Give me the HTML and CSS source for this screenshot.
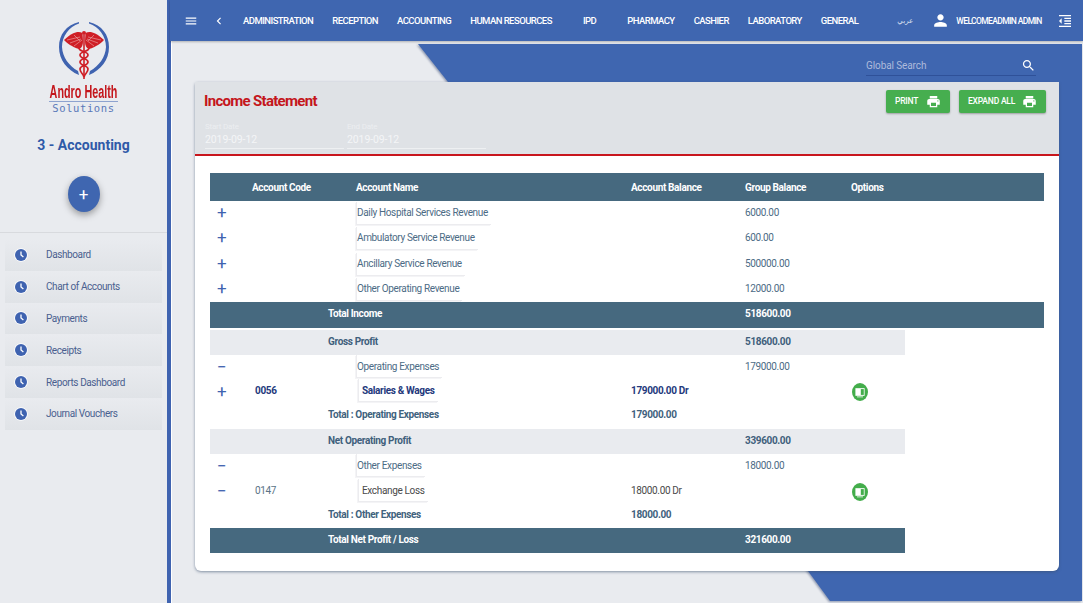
FILE: index.html
```html
<!DOCTYPE html>
<html lang="en">
<head>
<meta charset="utf-8">
<title>Income Statement</title>
<link rel="stylesheet" href="styles.css">
</head>
<body>
<svg class="defs" width="0" height="0" aria-hidden="true">
  <symbol id="i-print" viewBox="0 0 24 24"><path d="M19 8H5c-1.66 0-3 1.34-3 3v6h4v4h12v-4h4v-6c0-1.66-1.34-3-3-3zm-3 11H8v-5h8v5zm3-7c-.55 0-1-.45-1-1s.45-1 1-1 1 .45 1 1-.45 1-1 1zm-1-9H6v4h12V3z"/></symbol>
  <symbol id="i-clock" viewBox="0 0 14 14"><circle cx="7" cy="7" r="6.8" fill="#fff"/><circle cx="7" cy="7" r="6" fill="#3f63b0"/><path d="M7 3.4V7l2.4 2" fill="none" stroke="#fff" stroke-width="1.3"/></symbol>
  <symbol id="i-book" viewBox="0 0 16 16" preserveAspectRatio="none"><circle cx="8" cy="8" r="8" fill="#43ad4b"/><path d="M3.4 4.6h9.2v6.8H3.4z" fill="#fff"/><path d="M8.8 5.4h3v5.2h-3z" fill="#43ad4b"/><path d="M5 12h6v.7H5z" fill="#fff"/></symbol>
</svg>

<aside class="sidebar">
  <div class="brand">
    <svg class="brand-mark" viewBox="0 0 52 60" aria-hidden="true">
      <path d="M21 1C8 4 1 14 1 26c0 13 8 23 20 28l-1-4C11 45 4.500 36 4 26 4 15 11 6 21 2.500Z" fill="#3f63b0"/>
      <path d="M31 1c13 3 20 13 20 25 0 13-8 23-20 28l1-4c9-5 15.500-14 16-24 0-11-7-20-17-23.500Z" fill="#3f63b0"/>
      <path d="M24.500 12C20 10 15 11 6 19c3 3 8 7 15 9 3-1 4-4 4-8Z" fill="#cf1f26"/>
      <path d="M27.500 12C32 10 37 11 46 19c-3 3-8 7-15 9-3-1-4-4-4-8Z" fill="#cf1f26"/>
      <path d="M9 19l13-3M12 22l11-4M16 25l8-6M16 14l6 6M43 19l-13-3M40 22l-11-4M36 25l-8-6M36 14l-6 6" stroke="#f3c9c9" stroke-width=".5" fill="none"/>
      <path d="M26 14v44" stroke="#cf1f26" stroke-width="1.600"/>
      <path d="M21 27c0 4 9 3 9 7s-8 3-8 7 8 3 8 7-3 4-4 8" fill="none" stroke="#cf1f26" stroke-width="1.700"/>
      <path d="M31 27c0 4-9 3-9 7s8 3 8 7-8 3-8 7 3 4 4 8" fill="none" stroke="#cf1f26" stroke-width="1.700"/>
      <circle cx="26" cy="12" r="2" fill="#cf1f26"/>
    </svg>
    <div class="brand-name"><span class="brand-name-text">Andro Health</span></div>
    <div class="brand-sub">Solutions</div>
  </div>
  <h2 class="module">3 - Accounting</h2>
  <button class="fab" type="button">+</button>
  <nav class="side-menu">
    <a class="side-item"><svg class="side-icon"><use href="#i-clock"/></svg>Dashboard</a>
    <a class="side-item"><svg class="side-icon"><use href="#i-clock"/></svg>Chart of Accounts</a>
    <a class="side-item"><svg class="side-icon"><use href="#i-clock"/></svg>Payments</a>
    <a class="side-item"><svg class="side-icon"><use href="#i-clock"/></svg>Receipts</a>
    <a class="side-item"><svg class="side-icon"><use href="#i-clock"/></svg>Reports Dashboard</a>
    <a class="side-item"><svg class="side-icon"><use href="#i-clock"/></svg>Journal Vouchers</a>
  </nav>
</aside>

<div class="main">
  <header class="topbar">
    <svg class="tb-menu" viewBox="0 0 24 24"><path d="M3 18h18v-2H3v2zm0-5h18v-2H3v2zm0-7v2h18V6H3z"/></svg>
    <svg class="tb-back" viewBox="0 0 24 24"><path d="M15.410 7.410L14 6l-6 6 6 6 1.410-1.410L10.830 12z"/></svg>
    <nav class="tb-nav">
      <a>ADMINISTRATION</a><a>RECEPTION</a><a>ACCOUNTING</a><a>HUMAN RESOURCES</a><a class="tb-ipd">IPD</a><a>PHARMACY</a><a>CASHIER</a><a>LABORATORY</a><a>GENERAL</a>
    </nav>
    <span class="tb-lang">عربي</span>
    <svg class="tb-user" viewBox="0 0 24 24"><path d="M12 12c2.210 0 4-1.790 4-4s-1.790-4-4-4-4 1.790-4 4 1.790 4 4 4zm0 2c-2.670 0-8 1.340-8 4v2h16v-2c0-2.660-5.330-4-8-4z"/></svg>
    <span class="tb-name">WELCOMEADMIN ADMIN</span>
    <svg class="tb-collapse" viewBox="0 0 24 24"><path d="M11 17h10v-2H11v2zm-8-5l4 4V8l-4 4zm0 9h18v-2H3v2zM3 3v2h18V3H3zm8 6h10V7H11v2zm0 4h10v-2H11v2z"/></svg>
  </header>

  <div class="content">
    <div class="backdrop"><div class="backdrop-shape"></div></div>
    <div class="search-row">
      <label class="search">
        <span class="search-text">Global Search</span>
        <svg class="search-icon" viewBox="0 0 24 24"><path d="M15.500 14h-.79l-.28-.27C15.410 12.590 16 11.110 16 9.500 16 5.910 13.090 3 9.500 3S3 5.910 3 9.500 5.910 16 9.500 16c1.610 0 3.090-.59 4.230-1.570l.27.28v.79l5 4.990L20.490 19l-4.990-5zm-6 0C7.010 14 5 11.990 5 9.500S7.010 5 9.500 5 14 7.010 14 9.500 11.990 14 9.500 14z"/></svg>
      </label>
    </div>

    <section class="card">
      <div class="card-head">
        <div class="head-left">
          <h1 class="title">Income Statement</h1>
          <div class="dates">
            <div class="date"><span class="date-label">Start Date</span><span class="date-value">2019-09-12</span></div>
            <div class="date"><span class="date-label">End Date</span><span class="date-value">2019-09-12</span></div>
          </div>
        </div>
        <div class="actions">
          <button class="btn btn-print" type="button">PRINT<svg class="btn-icon"><use href="#i-print"/></svg></button>
          <button class="btn btn-expand" type="button">EXPAND ALL<svg class="btn-icon"><use href="#i-print"/></svg></button>
        </div>
      </div>

      <div class="table">
        <div class="row row-head">
          <span class="c-code">Account Code</span><span class="c-name">Account Name</span><span class="c-bal">Account Balance</span><span class="c-group">Group Balance</span><span class="c-opt">Options</span>
        </div>

        <div class="row row-item"><span class="c-tog">+</span><span class="c-name"><span class="tag">Daily Hospital Services Revenue</span></span><span class="c-group">6000.00</span></div>
        <div class="row row-item"><span class="c-tog">+</span><span class="c-name"><span class="tag">Ambulatory Service Revenue</span></span><span class="c-group">600.00</span></div>
        <div class="row row-item"><span class="c-tog">+</span><span class="c-name"><span class="tag">Ancillary Service Revenue</span></span><span class="c-group">500000.00</span></div>
        <div class="row row-item"><span class="c-tog">+</span><span class="c-name"><span class="tag">Other Operating Revenue</span></span><span class="c-group">12000.00</span></div>

        <div class="row row-total row-wide"><span class="c-label">Total Income</span><span class="c-group">518600.00</span></div>
        <div class="row row-sub"><span class="c-label">Gross Profit</span><span class="c-group">518600.00</span></div>

        <div class="row row-parent"><span class="c-tog">−</span><span class="c-name"><span class="tag">Operating Expenses</span></span><span class="c-group">179000.00</span></div>
        <div class="row row-acct row-strong"><span class="c-tog">+</span><span class="c-code">0056</span><span class="c-name"><span class="tag tag-in">Salaries &amp; Wages</span></span><span class="c-bal">179000.00 Dr</span><span class="c-opt"><svg class="opt-icon"><use href="#i-book"/></svg></span></div>
        <div class="row row-sum"><span class="c-label">Total : Operating Expenses</span><span class="c-bal">179000.00</span></div>
        <div class="row row-sub"><span class="c-label">Net Operating Profit</span><span class="c-group">339600.00</span></div>

        <div class="row row-parent row-parent-tall"><span class="c-tog">−</span><span class="c-name"><span class="tag">Other Expenses</span></span><span class="c-group">18000.00</span></div>
        <div class="row row-acct"><span class="c-tog">−</span><span class="c-code">0147</span><span class="c-name"><span class="tag tag-in">Exchange Loss</span></span><span class="c-bal">18000.00 Dr</span><span class="c-opt"><svg class="opt-icon"><use href="#i-book"/></svg></span></div>
        <div class="row row-sum"><span class="c-label">Total : Other Expenses</span><span class="c-bal">18000.00</span></div>
        <div class="row row-total row-end"><span class="c-label">Total Net Profit / Loss</span><span class="c-group">321600.00</span></div>
      </div>
    </section>
  </div>
</div>
</body>
</html>
```
FILE: styles.css
```css
* { box-sizing: border-box; }
html, body { margin: 0; height: 100%; }
body {
  display: flex;
  width: 1083px;
  height: 603px;
  overflow: hidden;
  font-family: Roboto, "Liberation Sans", sans-serif;
  background: #e9ebef;
}
.defs { position: absolute; }

/* Sidebar */
.sidebar {
  width: 171px;
  flex: none;
  background: #e9ebef;
  border-right: 4px solid #3f63b0;
  display: flex;
  flex-direction: column;
  align-items: center;
  padding-top: 21px;
}
.brand { display: flex; flex-direction: column; align-items: center; }
.brand-mark { width: 52px; height: 60px; display: block; }
.brand-name {
  width: 69px;
  height: 18px;
  margin-top: 2px;
  display: flex;
  justify-content: center;
  white-space: nowrap;
}
.brand-name-text {
  flex: none;
  font-family: "Liberation Sans", sans-serif;
  font-weight: 700;
  font-size: 18px;
  line-height: 18px;
  color: #c4161c;
  transform: scaleX(.6);
}
.brand-sub {
  width: 69px;
  text-align: center;
  border-top: 1px solid #8ea3cf;
  font-family: "DejaVu Sans Mono", monospace;
  font-size: 10.500px;
  line-height: 12px;
  letter-spacing: .6px;
  color: #5b79b9;
}
.module {
  margin: 22px 0 0;
  font-size: 14px;
  line-height: 18px;
  font-weight: 700;
  color: #2f5aa8;
}
.fab {
  margin-top: 22px;
  width: 32px;
  height: 36px;
  border: 0;
  border-radius: 50%;
  background: #3f66b0;
  color: #fff;
  font: 400 17px/36px Roboto, sans-serif;
  padding: 0;
  box-shadow: 0 3px 7px rgba(0, 0, 0, .35);
}
.side-menu {
  align-self: stretch;
  margin-top: 20px;
  border-top: 1px solid #d8dade;
  padding: 6px 5px 0;
}
.side-item {
  display: flex;
  align-items: center;
  height: 31.800px;
  font-size: 10px;
  letter-spacing: -.4px;
  color: #4a5f8f;
  background: linear-gradient(#e9ebef, #e0e3e7);
}
.side-icon { width: 14px; height: 14px; margin: 0 18px 0 9px; flex: none; }

/* Top bar */
.main { flex: 1; min-width: 0; display: flex; flex-direction: column; }
.topbar {
  height: 41px;
  flex: none;
  margin-left: -1px;
  background: #3f66b0;
  display: flex;
  align-items: center;
  color: #fff;
  position: relative;
  z-index: 2;
  box-shadow: 0 1px 2px rgba(0, 0, 0, .25);
}
.topbar svg { fill: #fff; flex: none; }
.tb-menu { width: 14px; height: 14px; margin-left: 14px; }
.tb-back { width: 14px; height: 14px; margin-left: 14px; }
.tb-nav { display: flex; gap: 19px; margin-left: 17px; }
.tb-nav a { font-size: 9.500px; letter-spacing: -.55px; font-weight: 500; white-space: nowrap; }
.tb-ipd { padding: 0 12px; }
.tb-lang {
  flex: none;
  width: 14px;
  white-space: nowrap;
  font: 7px "DejaVu Sans", sans-serif;
  margin-left: 39px;
  color: #dfe5f3;
}
.tb-user { width: 19px; height: 19px; margin-left: 20px; }
.tb-name { font-size: 8.500px; letter-spacing: -.62px; font-weight: 500; margin-left: 6px; white-space: nowrap; }
.tb-collapse { width: 16px; height: 16px; margin-left: 15px; }

/* Content */
.content {
  flex: 1;
  position: relative;
  padding: 0 0 0 23px;
  background: #e9ebef;
  border-left: 1px solid #fff;
}
.backdrop {
  position: absolute;
  inset: 0;
  filter: drop-shadow(-1px 1px 1px rgba(30, 50, 100, .45));
}
.backdrop-shape {
  position: absolute;
  left: 0;
  top: 0;
  width: 911px;
  height: 561px;
  background: #3f66b0;
  clip-path: polygon(246px 3px, 910px 3px, 910px 560px, 658px 560px, 636px 530px, 276px 41px);
}
.search-row {
  position: relative;
  height: 41px;
  width: 864px;
  display: flex;
  justify-content: flex-end;
  padding-right: 23px;
}
.search {
  width: 170px;
  height: 35px;
  border-bottom: 1px solid #2f5199;
  display: flex;
  align-items: center;
  justify-content: space-between;
  padding-top: 14px;
}
.search-text { font-size: 10px; letter-spacing: -.1px; color: #aebbdb; }
.search-icon { width: 15px; height: 15px; fill: #fff; }

/* Card */
.card {
  position: relative;
  width: 864px;
  height: 489px;
  background: #fff;
  border-radius: 3px 3px 6px 6px;
  box-shadow: 0 1px 3px rgba(60, 80, 110, .6);
}
.card-head {
  height: 74px;
  background: #dfe2e6;
  border-bottom: 2px solid #c8161d;
  display: flex;
  justify-content: space-between;
  padding: 9px 13px 0 9px;
}
.title {
  margin: 0;
  font-size: 15px;
  line-height: 20px;
  letter-spacing: -.7px;
  font-weight: 700;
  color: #c4161c;
}
.dates { display: flex; gap: 3px; margin: 10px 0 0 1px; }
.date {
  width: 139px;
  height: 28px;
  display: flex;
  flex-direction: column;
  border-bottom: 1px solid #eef0f2;
}
.date-label { font-size: 8px; line-height: 11px; color: #eceef1; letter-spacing: -.2px; }
.date-value { font-size: 10.500px; line-height: 16px; color: #f4f5f7; letter-spacing: -.1px; }
.actions { display: flex; gap: 9px; margin-top: -1px; }
.btn {
  height: 23px;
  border: 0;
  border-radius: 2px;
  background: #46ae4f;
  color: #fff;
  font: 500 8.500px/23px Roboto, sans-serif;
  letter-spacing: -.2px;
  display: flex;
  align-items: center;
  justify-content: space-between;
  padding: 0 9px;
  box-shadow: 0 1px 2px rgba(0, 0, 0, .3);
}
.btn-print { width: 64px; }
.btn-expand { width: 87px; }
.btn-icon { width: 15px; height: 15px; fill: #fff; }

/* Table */
.table { padding: 17px 15px 0; }
.row {
  display: grid;
  grid-template-columns: 42px 76px 28px 275px 114px 106px 54px;
  align-items: center;
  width: 695px;
  font-size: 10px;
  letter-spacing: -.35px;
  color: #4c6b85;
}
.row-head, .row-wide { width: 834px; }
.row-head {
  height: 28px;
  background: #46697f;
  color: #fff;
  font-weight: 700;
}
.c-tog {
  grid-column: 1;
  justify-self: start;
  margin-left: 7px;
  font: 400 17px/17px Roboto, sans-serif;
  color: #3f63b0;
}
.c-code { grid-column: 2; }
.c-name { grid-column: 4; }
.c-bal { grid-column: 5; }
.c-group { grid-column: 6; }
.c-opt { grid-column: 7; }
.c-label { grid-column: 3 / 5; font-weight: 700; }

.row-item { height: 25.250px; }
.row-item .c-group, .row-item .c-tog { margin-bottom: 2px; }
.row-parent { height: 23px; }
.row-parent .c-tog { margin-top: 2px; }
.row-parent-tall { height: 24px; padding-bottom: 1px; }

.tag {
  display: inline-block;
  height: 23px;
  line-height: 21px;
  padding: 0 3px 0 0;
  border-left: 1px solid #ececef;
  border-bottom: 1px solid #ececef;
  box-shadow: -1px 1px 0 #f4f4f6;
}
.row-parent .tag, .row-acct .tag { line-height: 23px; }
.tag-in { margin-left: 2px; padding-left: 3px; }

.row-acct { height: 24px; color: #4a4a4a; }
.row-acct .c-tog { margin-top: 2px; }
.row-acct .c-code { padding-left: 3px; color: #5a7386; }
.row-strong, .row-strong .c-code { color: #24397c; font-weight: 700; }
.row-acct .c-opt { padding: 3px 0 0 1px; display: flex; }
.opt-icon { width: 16px; height: 18px; }

.row-sum { height: 25px; font-weight: 700; color: #3f627d; }
.row-total {
  height: 26px;
  padding-bottom: 3px;
  background: #46697f;
  color: #fff;
  font-weight: 700;
}
.row-end { height: 25px; margin-top: 1px; }
.row-sub {
  height: 25px;
  margin-top: 2px;
  padding-bottom: 3px;
  background: #e9ebef;
  color: #3f5f7c;
  font-weight: 700;
}
```
